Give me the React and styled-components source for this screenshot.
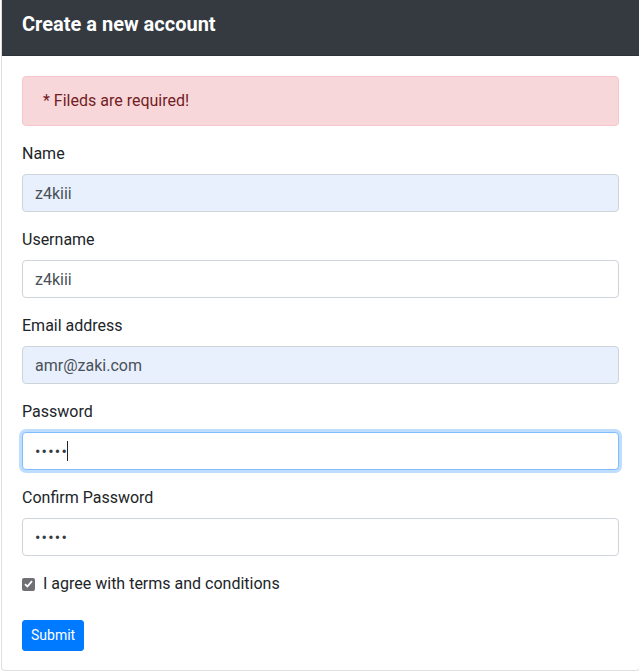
import styled, { createGlobalStyle } from "styled-components";

/* -----------------------------
   ESTILOS
----------------------------- */

const Global = createGlobalStyle`
  html, body {
    margin: 0;
    padding: 0;
    overflow: hidden;
    background: #fff;
  }
  body {
    font-family: "Segoe UI", Roboto, "Noto Sans", Arial, sans-serif;
    font-size: 16px;
    line-height: 1.5;
    color: #212529;
  }
  * { box-sizing: border-box; }
`;

const Card = styled.div`
  width: 639px;
  margin: 0 0 0 1px;
  border: 1px solid rgba(0, 0, 0, 0.125);
  border-top: 0;
  border-radius: 0 0 4px 4px;
  background: #fff;
  overflow: hidden;
`;

const Header = styled.div`
  background: #343a40;
  color: #fff;
  padding: 9px 20px 16px 20px;
  border-bottom: 1px solid rgba(0, 0, 0, 0.125);
`;

const Titulo = styled.h5`
  margin: 0;
  font-size: 20px;
  font-weight: 700;
  line-height: 30px;
`;

const Body = styled.form`
  padding: 20px 20px 19px 20px;
`;

const Alerta = styled.div`
  padding: 12px 20px;
  margin-bottom: 16px;
  border: 1px solid #f5c6cb;
  border-radius: 4px;
  background: #f8d7da;
  color: #721c24;
`;

const Grupo = styled.div`
  margin-bottom: 16px;
`;

const Etiqueta = styled.label`
  display: block;
  margin-bottom: 8px;
`;

const CampoWrap = styled.div`
  position: relative;
`;

const Campo = styled.input`
  display: block;
  width: 100%;
  height: 38px;
  padding: 6px 12px;
  font-family: inherit;
  font-size: 16px;
  line-height: 1.5;
  color: #495057;
  background: ${({ $autofill }) => ($autofill ? "#e8f0fe" : "#fff")};
  border: 1px solid ${({ $focus }) => ($focus ? "#80bdff" : "#ced4da")};
  border-radius: 4px;
  outline: none;
  box-shadow: ${({ $focus }) =>
    $focus ? "0 0 0 3px rgba(0, 123, 255, 0.25)" : "none"};

  &[type="password"] {
    color: #343a40;
    letter-spacing: 1.2px;
  }
`;

const Cursor = styled.span`
  position: absolute;
  left: 45px;
  top: 9px;
  width: 1px;
  height: 20px;
  background: #212529;
`;

const CheckFila = styled.label`
  display: flex;
  align-items: center;
  gap: 8px;
  margin-bottom: 24px;
`;

const Caja = styled.span`
  width: 13px;
  height: 13px;
  border-radius: 2px;
  background: #6f6f74;
  display: flex;
  align-items: center;
  justify-content: center;
`;

const Boton = styled.button`
  display: block;
  padding: 4px 8px;
  font-family: inherit;
  font-size: 14px;
  line-height: 21px;
  color: #fff;
  background: #007bff;
  border: 1px solid #007bff;
  border-radius: 3px;
  cursor: pointer;
`;

/* -----------------------------
   COMPONENTE
----------------------------- */

const campos = [
  { label: "Name", type: "text", value: "z4kiii", autofill: true },
  { label: "Username", type: "text", value: "z4kiii" },
  { label: "Email address", type: "email", value: "amr@zaki.com", autofill: true },
  { label: "Password", type: "password", value: "12345", focus: true },
  { label: "Confirm Password", type: "password", value: "12345" },
];

const App = () => {
  return (
    <>
      <Global />
      <Card>
        <Header>
          <Titulo>Create a new account</Titulo>
        </Header>

        <Body onSubmit={(e) => e.preventDefault()}>
          <Alerta>* Fileds are required!</Alerta>

          {campos.map((c) => (
            <Grupo key={c.label}>
              <Etiqueta>{c.label}</Etiqueta>
              <CampoWrap>
                <Campo
                  type={c.type}
                  defaultValue={c.value}
                  $autofill={c.autofill}
                  $focus={c.focus}
                  readOnly
                />
                {c.focus && <Cursor />}
              </CampoWrap>
            </Grupo>
          ))}

          <CheckFila>
            <Caja>
              <svg width="9" height="8" viewBox="0 0 9 8">
                <path
                  d="M1 4.2 L3.4 6.5 L8 1.2"
                  fill="none"
                  stroke="#fff"
                  strokeWidth="1.8"
                />
              </svg>
            </Caja>
            I agree with terms and conditions
          </CheckFila>

          <Boton type="submit">Submit</Boton>
        </Body>
      </Card>
    </>
  );
};

export default App;
